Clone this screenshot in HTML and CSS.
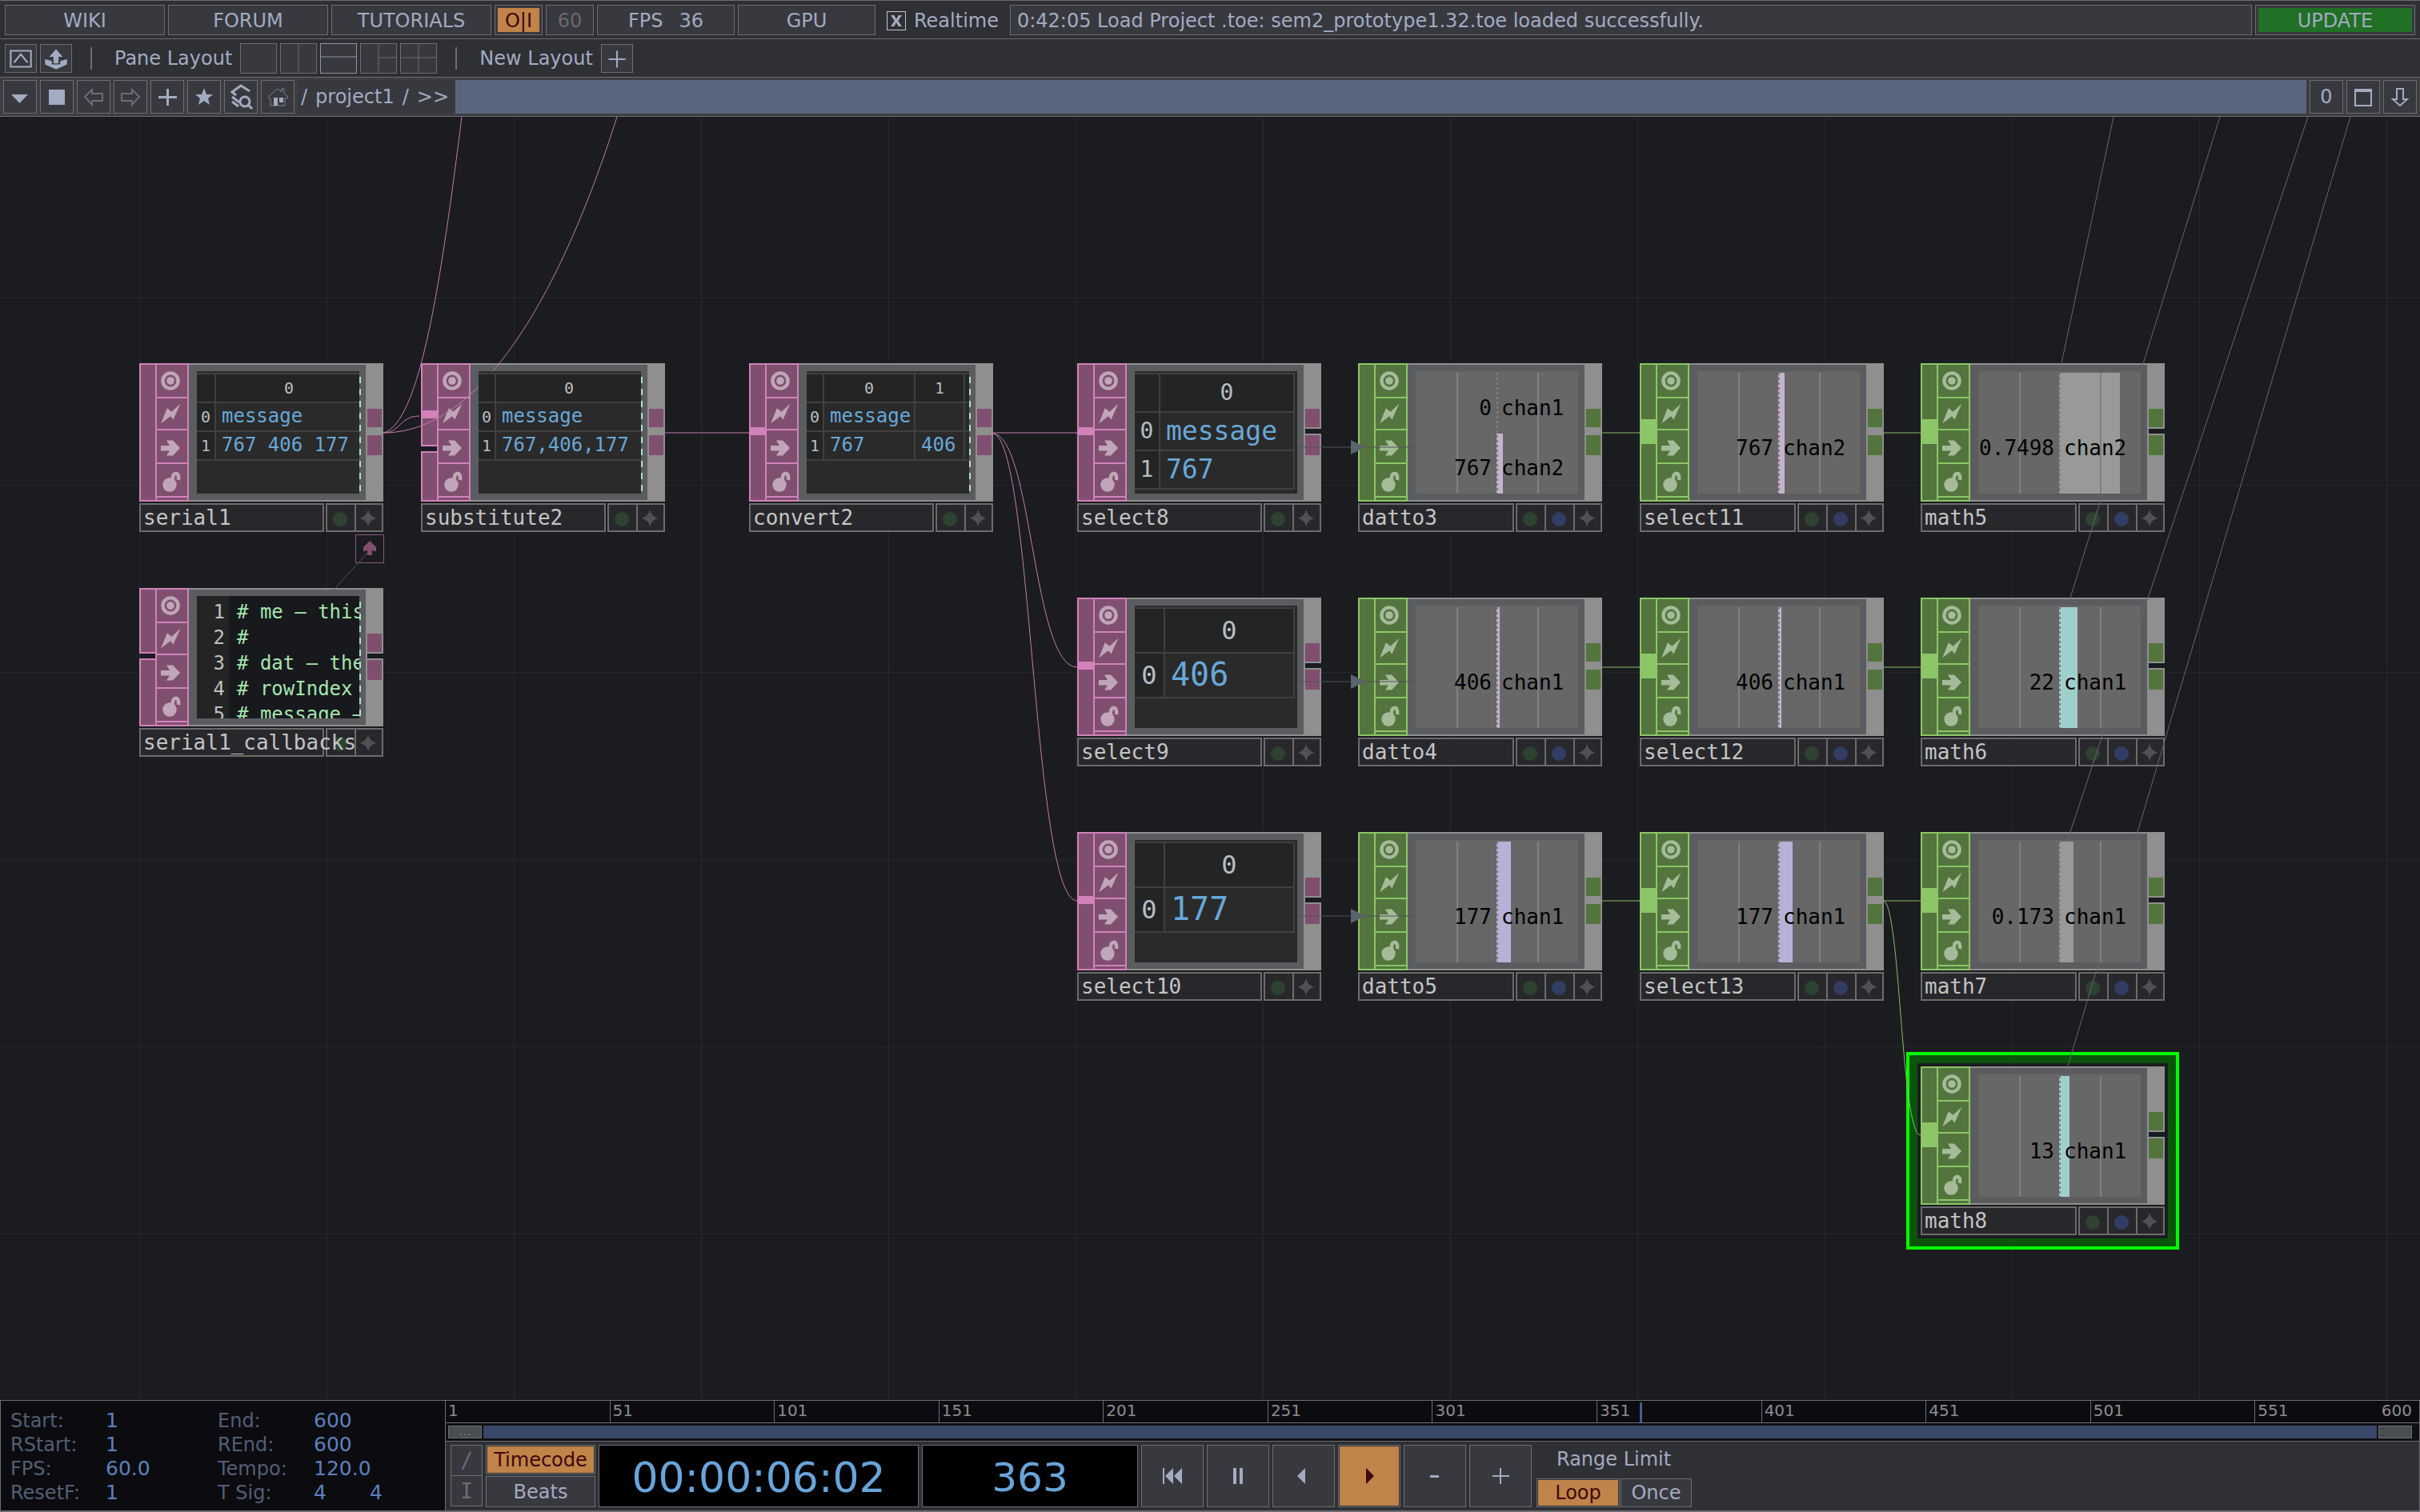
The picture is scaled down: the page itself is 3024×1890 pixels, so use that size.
FILE: index.html
```html
<!doctype html>
<html lang="en">
<head>
  <meta charset="utf-8" />
  <meta name="viewport" content="width=device-width,initial-scale=1" />
  <title>sem2_prototype1.32.toe</title>
  <link rel="stylesheet" href="styles.css">
</head>

<body>
  <!-- shared icons -->
  <svg class="defs" aria-hidden="true">
    <symbol id="i-view" viewBox="0 0 38 40">
      <circle cx="17" cy="20" r="9.6" fill="none" stroke="currentColor" stroke-width="4.4" />
      <circle cx="17" cy="20" r="4.8" />
    </symbol>
    <symbol id="i-bolt" viewBox="0 0 38 40">
      <path d="M30 7 20.500 28 17 23.500 4.500 33 12.500 13 18.500 17.500Z" />
    </symbol>
    <symbol id="i-pass" viewBox="0 0 38 40">
      <path d="M5 19H16L12 12.500H20L29 22 20 31.500H12L16 25.500H5Z" />
    </symbol>
    <symbol id="i-bomb" viewBox="0 0 38 40">
      <circle cx="16" cy="26" r="8.700" />
      <path d="M20 21C18 9 29 9 27 20" fill="none" stroke="currentColor" stroke-width="4.500" />
    </symbol>
    <symbol id="i-dot" viewBox="0 0 34 32"><circle cx="16" cy="18" r="9" /></symbol>
    <symbol id="i-star" viewBox="0 0 34 32">
      <path d="M16 5Q18 14 27 17Q18 19 16 28Q14 19 5 17Q14 14 16 5Z" />
    </symbol>
  </svg>

  <header>
    <div class="bar bar-main">
      <button type="button" class="w-link">WIKI</button>
      <button type="button" class="w-link">FORUM</button>
      <button type="button" class="w-link">TUTORIALS</button>
      <button type="button" class="w-small on">O|I</button>
      <button type="button" class="w-small off">60</button>
      <button type="button" class="w-stat"><span>FPS</span><span>36</span></button>
      <button type="button" class="w-stat">GPU</button>
      <label class="realtime"><input type="checkbox" checked> Realtime</label>
      <div class="status">0:42:05 Load Project .toe: sem2_prototype1.32.toe loaded successfully.</div>
      <button type="button" class="update">UPDATE</button>
    </div>

    <div class="bar bar-layout">
      <button type="button" class="icon" aria-label="Dialog">
        <svg viewBox="0 0 36 32"><path d="M6 7h24v19H6zM10 21l8-10 8 10" fill="none" stroke="currentColor" stroke-width="2" /></svg>
      </button>
      <button type="button" class="icon" aria-label="Export">
        <svg viewBox="0 0 36 32"><path d="M18 5l8 9h-5v8h-6v-8h-5zM5 17l8 2v4h10v-4l8-2v6l-13 6-13-6z" /></svg>
      </button>
      <i class="sep"></i>
      <span>Pane Layout</span>
      <div class="panes">
        <button type="button" aria-label="Single"></button>
        <button type="button" aria-label="Columns"><svg viewBox="0 0 44 36"><path d="M22 0V36" /></svg></button>
        <button type="button" aria-label="Rows" class="cur"><svg viewBox="0 0 44 36"><path d="M0 16H44" /></svg></button>
        <button type="button" aria-label="Three"><svg viewBox="0 0 44 36"><path d="M22 0V36M22 17H44" /></svg></button>
        <button type="button" aria-label="Four"><svg viewBox="0 0 44 36"><path d="M22 0V36M0 17H44" /></svg></button>
      </div>
      <i class="sep"></i>
      <span>New Layout</span>
      <button type="button" class="icon" aria-label="Add layout">
        <svg viewBox="0 0 36 32"><path d="M18 7V27M8 17H28" fill="none" stroke="currentColor" stroke-width="2" /></svg>
      </button>
    </div>

    <nav class="bar bar-path">
      <button type="button" aria-label="Pane type"><svg viewBox="0 0 40 40"><path d="M9 17H30L19.500 28Z" /></svg></button>
      <button type="button" aria-label="Stop"><svg viewBox="0 0 40 40"><path d="M10 11H30V30H10Z" /></svg></button>
      <button type="button" aria-label="Back" class="dim"><svg viewBox="0 0 40 40"><path d="M9 20l9-9v5h13v9H18v5z" /></svg></button>
      <button type="button" aria-label="Forward" class="dim"><svg viewBox="0 0 40 40"><path d="M31 20l-9-9v5H9v9h13v5z" /></svg></button>
      <button type="button" aria-label="Add operator"><svg viewBox="0 0 40 40"><path d="M19 10h3v9h10v3H22v9h-3v-9H9v-3h10z" /></svg></button>
      <button type="button" aria-label="Bookmarks"><svg viewBox="0 0 40 40"><path d="M20 9l3 8h8l-6 5 2 8-7-5-7 5 2-8-6-5h8z" /></svg></button>
      <button type="button" aria-label="Find" class="line"><svg viewBox="0 0 40 40"><path d="M31 13L20 6 9 14l5 4M9 20l9 7M9 26l8 6" /><circle cx="25" cy="26" r="6" /><path d="M29 30l5 5" /></svg></button>
      <button type="button" aria-label="Home" class="home"><svg viewBox="0 0 40 40"><path d="M9 19L20 10l5 4v-4h3v6l4 3v3h-3v9H11v-9H9z" fill="none" stroke="#7c8090" /><path d="M15 21h5v10h-5zM22 21h5v6h-5z" /></svg></button>
      <div class="crumbs">
        <a href="#root">/</a>
        <a href="#project1">project1</a>
        <a href="#project1">/</a>
        <a href="#project1">&gt;&gt;</a>
      </div>
      <input type="text" class="path" aria-label="Network path">
      <button type="button">0</button>
      <button type="button" aria-label="Maximise" class="line thin"><svg viewBox="0 0 40 40"><path d="M10 12H30V31H10z" /><path d="M9 10H31V14H9z" fill="currentColor" stroke="none" /></svg></button>
      <button type="button" aria-label="Close pane" class="line thin"><svg viewBox="0 0 40 40"><path d="M16 10h8v13h5l-9 8-9-8h5z" /></svg></button>
    </nav>
  </header>

  <main id="network" class="network">
    <svg class="wires" aria-hidden="true">
      <g class="dat">
        <path d="M479 395C500 395 500 374 524 374" />
        <path d="M479 395C525 384 552 199 577 0" />
        <path d="M479 395C600 395 700 224 771 0" />
        <path d="M830 395H936M1240 395H1346" />
        <path d="M1240 396C1290 396 1290 688 1346 688" />
        <path d="M1240 396C1290 396 1290 980 1346 980" />
      </g>
      <g class="chop">
        <path d="M2002 395H2049M2353 395H2400M2002 688H2049M2353 688H2400M2002 980H2049M2353 980H2400" />
        <path d="M2353 980C2375 980 2375 1273 2400 1273" />
      </g>
      <g class="ref">
        <path d="M2641 0L2574 318M2774 0L2584 611M2884 0L2583 906M2937 0L2580 1200" />
      </g>
      <g class="conv">
        <path d="M1620 413H1770M1620 706H1770M1620 999H1770" />
        <path class="tip" d="M1688 404l18 9-18 9zM1688 697l18 9-18 9zM1688 990l18 9-18 9z" />
        <path d="M460 544L411 598" />
      </g>
    </svg>
    <button type="button" class="dock" aria-label="Docked callbacks">
      <svg viewBox="0 0 34 34"><path d="M17 7l8 8v5h-3l-2-2v7h-6v-7l-2 2H9v-5z" /></svg>
    </button>
  </main>

  <footer>
    <dl class="range">
      <dt>Start:</dt><dd>1</dd><dt>End:</dt><dd>600</dd>
      <dt>RStart:</dt><dd>1</dd><dt>REnd:</dt><dd>600</dd>
      <dt>FPS:</dt><dd>60.0</dd><dt>Tempo:</dt><dd>120.0</dd>
      <dt>ResetF:</dt><dd>1</dd><dt>T Sig:</dt><dd class="sig"><span>4</span><span>4</span></dd>
    </dl>

    <div class="timeline">
      <div id="ruler" class="ruler"></div>
      <div class="scroll"><i class="grip">...</i><i class="span"></i><i class="grip"></i></div>
      <div class="transport">
        <div class="modes">
          <button type="button">/</button>
          <button type="button">I</button>
        </div>
        <div class="units">
          <button type="button" class="on">Timecode</button>
          <button type="button">Beats</button>
        </div>
        <output class="clock">00:00:06:02</output>
        <output class="frame">363</output>
        <button type="button" class="ctl" aria-label="Rewind"><svg viewBox="0 0 76 76"><path d="M26 28h2v20h-2zM39 28v20l-10-10zM50 28v20l-10-10z" /></svg></button>
        <button type="button" class="ctl" aria-label="Pause"><svg viewBox="0 0 76 76"><path d="M32 28h4v20h-4zM40 28h4v20h-4z" /></svg></button>
        <button type="button" class="ctl" aria-label="Reverse"><svg viewBox="0 0 76 76"><path d="M40 28v20l-10-10z" /></svg></button>
        <button type="button" class="ctl on" aria-label="Play"><svg viewBox="0 0 76 76"><path d="M34 28v20l10-10z" /></svg></button>
        <button type="button" class="ctl" aria-label="Step back"><svg viewBox="0 0 76 76"><path d="M32 37h11v3H32z" /></svg></button>
        <button type="button" class="ctl" aria-label="Step forward"><svg viewBox="0 0 76 76"><path d="M37 28h2v9h10v2H39v9h-2v-9H28v-2h9z" /></svg></button>
        <div class="limit">
          <span>Range Limit</span>
          <div>
            <button type="button" class="on">Loop</button>
            <button type="button">Once</button>
          </div>
        </div>
      </div>
    </div>
  </footer>

  <script src="network.js"></script>
</body>
</html>
```
FILE: styles.css
```css
* { box-sizing:border-box; }
html, body { height:100%; }
body { margin:0; display:flex; flex-direction:column; overflow:hidden; background:#1b1c20; color:#a3abc2; font:24px/28px "DejaVu Sans", Verdana, sans-serif; }
button, input { font:inherit; color:inherit; margin:0; padding:0; border-radius:0; }
button { display:flex; align-items:center; justify-content:center; background:#38393f; border:1px solid #6c6d74; }
button svg { display:block; width:100%; height:100%; fill:currentColor; }
i { font-style:normal; }
.defs { position:absolute; width:0; height:0; }

/* top bars */
.bar { display:flex; gap:4px; background:#2f3034; border-bottom:1px solid #6c6d74; }
.bar-main { border-top:1px solid #6c6d74; padding:5px 6px 4px; }
.bar-main button { height:38px; padding-top:2px; }
.w-link { width:200px; }
.w-small { width:60px; }
.w-stat { width:172px; gap:20px; }
.bar-main .on { background:#c08348; color:#3d090d; box-shadow:inset 0 0 0 3px #38393f; }
.off { color:#686970; }
.realtime { display:flex; align-items:center; gap:10px; padding:2px 10px 0; }
.realtime input { appearance:none; width:24px; height:24px; border:1px solid #c3c6d0; background:#2f3034; display:flex; align-items:center; justify-content:center; }
.realtime input:checked::before { content:""; width:14px; height:14px; background:currentColor; clip-path:polygon(0 0, 30% 0, 50% 34%, 70% 0, 100% 0, 66% 50%, 100% 100%, 70% 100%, 50% 66%, 30% 100%, 0 100%, 34% 50%); }
.status { flex:1; height:38px; padding:5px 8px; background:#38393f; border:1px solid #6c6d74; white-space:nowrap; overflow:hidden; }
.bar-main .update { width:200px; background:#207026; box-shadow:inset 0 0 0 3px #38393f; }

.bar-layout { height:48px; padding:0 6px; align-items:center; }
.bar-layout .icon { width:40px; height:36px; }
.sep { width:2px; height:28px; margin:0 24px 0 19px; background:#6c6d74; }
.panes { display:flex; gap:4px; margin-left:6px; }
.panes button { width:46px; height:38px; }
.panes path { fill:none; stroke:#6c6d74; }
.panes .cur, .panes .cur path { border-color:#9094a0; stroke:#9094a0; }
.bar-layout .icon:last-child { margin-left:6px; }

.bar-path { padding:3px 4px; background:#3d3e3f; }
.bar-path button { width:42px; height:42px; }
.bar-path .dim { color:#6c6d74; }
.bar-path .dim svg, .bar-path .line svg { fill:none; stroke:currentColor; stroke-width:2; }
.bar-path .line svg { stroke-width:3; }
.bar-path .thin svg { stroke-width:2; }
.crumbs { display:flex; align-items:center; gap:10px; padding:0 8px 0 4px; margin-right:-4px; background:#38393f; }
.crumbs a { color:inherit; text-decoration:none; }
.path { flex:1; min-width:0; height:42px; border:0; background:#5a6680; }

/* network editor */
.network { position:relative; flex:1; overflow:hidden; background:#1b1c20; background-image:linear-gradient(90deg, #27282d 1px, transparent 1px), linear-gradient(#27282d 1px, transparent 1px); background-size:234px 234px; background-position:174px 226px; }
.wires { position:absolute; inset:0; width:100%; height:100%; z-index:1; pointer-events:none; fill:none; }
.wires .dat { stroke:#c07dac; }
.wires .chop { stroke:#86bd64; }
.wires .ref { stroke:#66676b; }
.wires .conv { stroke:#505358; }
.wires .tip { fill:#5c626e; stroke:none; }
.dock { position:absolute; left:444px; top:522px; width:36px; height:36px; background:#1b1c20; border-color:#8b5a7c; color:#804f70; }

.node { position:absolute; width:305px; font-family:"DejaVu Sans Mono", monospace; }
.node.dat { --fill:#804f70; --edge:#d082b9; --icon:#c0a6b8; }
.node.chop { --fill:#53753d; --edge:#8cc668; --icon:#a5bb99; }
.body { display:flex; height:173px; }
.ins { position:relative; width:20px; display:flex; flex-direction:column; gap:6px; }
.ins div { flex:1; background:var(--fill); border:2px solid var(--edge); border-right:0; }
.ins.half div:first-child { flex:0 0 82px; }
.ins.low div:first-child { flex:0 0 104px; }
.plug { position:absolute; left:0; top:80px; width:20px; height:10px; background:var(--edge); }
.chop .plug { top:70px; height:31px; }
.low .plug { top:59px; }
.flags { width:42px; display:grid; grid-template-rows:40px 38px 40px 40px 3px; gap:2px; padding:2px; background:var(--edge); }
.flags button, .flags i { border:0; background:var(--fill); color:var(--icon); min-height:0; overflow:hidden; }
.view { flex:1; min-width:0; display:flex; padding:8px 8px 8px 10px; background:#5b5c5f; border:solid #8f8f8f; border-width:2px 0; position:relative; }
.outs { width:22px; padding:57px 2px 0; background:#8f8f8f; }
.outs div { height:23px; background:var(--fill); }
.outs div:last-child { height:25px; }
.outs i { display:block; height:10px; margin-right:-2px; border:solid #8f8f8f; border-width:2px 0; }
.outs.open i { background:#1b1c20; }

.label { display:flex; gap:2px; margin-top:2px; height:36px; }
.name { flex:1; min-width:0; padding:2px 3px; background:#28282c; border:2px solid #6c6c6c; color:#c4c4c4; font-size:26px; white-space:nowrap; position:relative; z-index:1; }
.marks { display:flex; background:#28282c; border:2px solid #6c6c6c; }
.marks button { width:36px; border:0; border-left:2px solid #6c6c6c; background:none; }
.marks button:first-child { width:34px; border-left:0; }
.marks button:last-child { width:34px; }
.m-view { color:#2d4231; }
.m-exp { color:#313d62; }
.m-act { color:#505155; }
.selected::before { content:""; position:absolute; inset:-18px; border:4px solid #00ff00; box-shadow:inset 0 0 0 10px rgba(3,110,3,.68); }

/* table viewer */
.pane { flex:1; min-width:0; position:relative; z-index:2; overflow:hidden; background:#2a2a2a; }
.pane.more { overflow:visible; clip-path:inset(0 -2px 0 0); }
.pane.more::after { content:""; position:absolute; right:-2px; top:7px; bottom:0; width:2px; background:repeating-linear-gradient(#aee0cc 0 8px, transparent 8px 15px); }
.clip { overflow:hidden; height:100%; }
.grid { table-layout:fixed; width:max-content; margin-top:2px; border-spacing:0; border-top:2px solid #404040; line-height:1; }
.grid th, .grid td { height:36px; padding:0 7px 2px; border:solid #404040; border-width:0 2px 2px 0; text-align:left; overflow:hidden; white-space:nowrap; font-weight:400; }
.grid th { padding:0; background:#232524; color:#b9bcc4; text-align:center; font-size:20px; }
.grid td { color:#68a8d8; font-size:24px; }
.grid.m th, .grid.m td { height:48px; }
.grid.m th { font-size:28px; }
.grid.m td { font-size:33px; }
.grid.l th, .grid.l td { height:56px; }
.grid.l th { font-size:32px; }
.grid.l td { font-size:40px; }

/* text viewer */
.code { display:grid; grid-template-columns:40px 1fr; height:100%; overflow:hidden; margin:0; font-family:inherit; line-height:32px; background:#17191d; color:#a6e6ae; }
.code span { padding:4px 5px 0 0; text-align:right; background:#232524; color:#c0c0c4; white-space:pre; }
.code code { padding:4px 0 0 10px; font-family:inherit; white-space:pre; }

/* channel viewer */
.chans { flex:1; position:relative; z-index:2; display:flex; flex-direction:column; padding-top:2px; background:#676767; color:#000; font-size:26px; }
.chans::before { content:""; position:absolute; inset:2px 0 0; z-index:1; background:linear-gradient(#808080, #808080) 51px 0/2px 100% no-repeat, linear-gradient(#808080, #808080) 152px 0/2px 100% no-repeat, repeating-linear-gradient(#808080 0 3px, transparent 3px 6px) 101px 0/2px 100% no-repeat; }
.chan { flex:1; display:grid; grid-template-columns:101px 1fr; align-items:end; position:relative; padding-bottom:41px; line-height:32px; }
.duo .chan { padding-bottom:16px; }
.bar-fill { position:absolute; left:101px; top:0; bottom:0; }
.chan span { position:relative; z-index:2; padding-left:6px; white-space:nowrap; }
.chan span:first-of-type { padding:0 6px 0 0; display:flex; justify-content:flex-end; }
.tone-pink { background:#c4b3cc; }
.tone-violet { background:#b7b1d8; }
.tone-cyan { background:#9fcfcd; }
.tone-gray { background:#979a98; }

/* timeline */
footer { display:flex; border:1px solid #6c6d74; border-width:1px 1px 2px; background:#2f3034; }
.range { width:555px; margin:0; padding:11px 12px 0; display:grid; grid-template-columns:119px 140px 120px 1fr; grid-auto-rows:30px; background:#0c0c10; color:#535e75; }
.range dd { margin:0; color:#5c80bf; font-size:25px; }
.sig { display:flex; gap:54px; }
.timeline { flex:1; min-width:0; border-left:1px solid #6c6d74; }
.ruler { position:relative; display:flex; height:28px; background:#0c0c10; border-bottom:1px solid #6c6d74; color:#8c8c90; font-size:20px; line-height:24px; }
.ruler div { flex:1; display:flex; justify-content:space-between; padding:0 9px 0 3px; border-left:1px solid #6c6d74; }
.ruler div:first-child { border-left:0; }
.head { position:absolute; top:2px; bottom:0; width:3px; background:#415d93; }
.scroll { display:flex; gap:2px; height:23px; padding:3px 9px 3px 3px; background:#0f1013; border-bottom:1px solid #6c6d74; }
.grip { width:42px; background:#4a4d50; border:1px solid #6c6d74; color:#777; font-size:16px; line-height:12px; text-align:center; }
.span { flex:1; background:#374869; }
.transport { display:flex; gap:4px; padding:4px 6px; height:86px; }
.modes { display:flex; flex-direction:column; }
.modes button { width:40px; height:39px; color:#6c6d74; font-family:"DejaVu Sans Mono", monospace; font-size:26px; }
.modes button + button { border-top:0; height:38px; }
.units { display:flex; flex-direction:column; gap:2px; }
.units button { width:137px; height:37px; }
.units button:last-child { height:39px; }
.transport .on { background:#c08348; color:#3d090d; box-shadow:inset 0 0 0 1px #2f3034; }
.clock, .frame { display:flex; align-items:center; justify-content:center; width:400px; height:78px; padding-top:4px; background:#000; border:1px solid #6c6d74; color:#68a5da; font-size:52px; }
.frame { width:270px; font-size:50px; }
.ctl { width:78px; height:78px; }
.limit { display:flex; flex-direction:column; justify-content:space-between; padding-left:2px; }
.limit > span { padding:4px 0 0 25px; }
.limit > div { display:flex; gap:1px; }
.limit button { width:89px; height:36px; }
.limit .on { width:104px; }
```
FILE: network.js
```js
// Operators in the network, positions are in editor pixels.
// plug: connected input, half/low: where the input strip is split, open: outputs not joined
const ops = [
  { name: "serial1", x: 174, y: 308, type: "dat", more: true,
    table: { cols: [24, 184], rows: [["message"], ["767 406 177"]] } },
  { name: "serial1_callbacks", x: 174, y: 589, type: "dat", more: true, ins: "half", open: true,
    code: ["# me – this DAT", "#", "# dat – the DAT", "# rowIndex", "# message – row"] },
  { name: "substitute2", x: 526, y: 308, type: "dat", more: true, ins: "low", plug: true,
    table: { cols: [22, 184], rows: [["message"], ["767,406,177"]] } },
  { name: "convert2", x: 936, y: 308, type: "dat", more: true, plug: true,
    table: { cols: [22, 114, 62, 40], rows: [["message", "", ""], ["767", "406", ""]], heads: ["0", "1", ""] } },
  { name: "select8", x: 1346, y: 308, type: "dat", plug: true, open: true,
    table: { size: "m", cols: [32, 168], rows: [["message"], ["767"]] } },
  { name: "select9", x: 1346, y: 601, type: "dat", plug: true, open: true,
    table: { size: "l", cols: [38, 162], rows: [["406"]] } },
  { name: "select10", x: 1346, y: 894, type: "dat", plug: true, open: true,
    table: { size: "l", cols: [38, 162], rows: [["177"]] } },

  { name: "datto3", x: 1697, y: 308, type: "chop", chans: [["0", "chan1", 0, "gray"], ["767", "chan2", 8, "pink"]] },
  { name: "datto4", x: 1697, y: 601, type: "chop", chans: [["406", "chan1", 4, "pink"]] },
  { name: "datto5", x: 1697, y: 894, type: "chop", chans: [["177", "chan1", 18, "violet"]] },
  { name: "select11", x: 2049, y: 308, type: "chop", plug: true, chans: [["767", "chan2", 8, "pink"]] },
  { name: "select12", x: 2049, y: 601, type: "chop", plug: true, chans: [["406", "chan1", 4, "pink"]] },
  { name: "select13", x: 2049, y: 894, type: "chop", plug: true, chans: [["177", "chan1", 18, "violet"]] },
  { name: "math5", x: 2400, y: 308, type: "chop", plug: true, open: true, chans: [["0.7498", "chan2", 76, "gray"]] },
  { name: "math6", x: 2400, y: 601, type: "chop", plug: true, open: true, chans: [["22", "chan1", 23, "cyan"]] },
  { name: "math7", x: 2400, y: 894, type: "chop", plug: true, open: true, chans: [["0.173", "chan1", 18, "gray"]] },
  { name: "math8", x: 2400, y: 1187, type: "chop", plug: true, open: true, selected: true, chans: [["13", "chan1", 13, "cyan"]] },
];

function btn(icon, label, cls) {
  return `<button type="button" class="${cls || ""}" aria-label="${label}"><svg><use href="#i-${icon}"/></svg></button>`;
}

function tableView(t) {
  const heads = t.heads || ["0"];
  const cols = t.cols.map(w => `<col style="width:${w}px">`).join("");
  const head = `<tr><th></th>${heads.map(h => `<th>${h}</th>`).join("")}</tr>`;
  const rows = t.rows.map((r, i) => `<tr><th>${i}</th>${r.map(c => `<td>${c}</td>`).join("")}</tr>`).join("");
  const width = t.cols.reduce((a, b) => a + b, 0);
  return `<table class="grid ${t.size || ""}" style="width:${width}px"><colgroup>${cols}</colgroup>${head}${rows}</table>`;
}

function codeView(lines) {
  return `<pre class="code"><span>${lines.map((l, i) => i + 1).join("\n")}</span><code>${lines.join("\n")}</code></pre>`;
}

function chanView(chans) {
  const rows = chans.map(([value, name, width, tone]) =>
    `<div class="chan"><i class="bar-fill tone-${tone}" style="width:${width}px"></i><span>${value}</span><span>${name}</span></div>`);
  return `<div class="chans ${chans.length > 1 ? "duo" : ""}">${rows.join("")}</div>`;
}

function viewer(op) {
  if (op.chans) return chanView(op.chans);
  const inner = op.code ? codeView(op.code) : tableView(op.table);
  return `<div class="pane ${op.more ? "more" : ""}"><div class="clip">${inner}</div></div>`;
}

const network = document.getElementById("network");

ops.forEach(op => {
  const el = document.createElement("section");
  el.className = `node ${op.type} ${op.selected ? "selected" : ""}`;
  el.style.left = op.x + "px";
  el.style.top = op.y + "px";
  el.innerHTML = `
    <div class="body">
      <div class="ins ${op.ins || ""}"><div></div>${op.ins ? "<div></div>" : ""}${op.plug ? '<i class="plug"></i>' : ""}</div>
      <div class="flags">
        ${btn("view", "Viewer active")}${btn("bolt", "Clone immune")}${btn("pass", "Bypass")}${btn("bomb", "Lock")}<i></i>
      </div>
      <div class="view">${viewer(op)}</div>
      <div class="outs ${op.open ? "open" : ""}"><div></div><i></i><div></div></div>
    </div>
    <div class="label">
      <div class="name">${op.name}</div>
      <div class="marks">
        ${btn("dot", "Display", "m-view")}${op.type === "chop" ? btn("dot", "Export", "m-exp") : ""}${btn("star", "Activate", "m-act")}
      </div>
    </div>`;
  network.appendChild(el);
});

// Ruler, one division every 50 frames
const ruler = document.getElementById("ruler");
const total = 600, current = 363;
for (let f = 1; f < total; f += 50) {
  const div = document.createElement("div");
  div.innerHTML = `<span>${f}</span>` + (f + 49 === total ? `<span>${total}</span>` : "");
  ruler.appendChild(div);
}
const head = document.createElement("i");
head.className = "head";
head.style.left = (current / total * 100) + "%";
ruler.appendChild(head);
```
